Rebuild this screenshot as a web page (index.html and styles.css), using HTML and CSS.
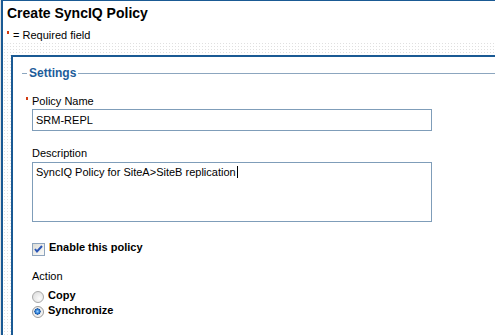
FILE: index.html
```html
<!DOCTYPE html>
<html lang="en">
<head>
    <meta charset="UTF-8">
    <meta name="viewport" content="width=device-width, initial-scale=1.0">
    <title>Create SyncIQ Policy</title>
    <link rel="stylesheet" href="styles.css">
</head>
<body>

    <div class="page">
        <div class="header">
            <h1 class="title">Create SyncIQ Policy</h1>
            <p class="req-note"><span class="req"></span>= Required field</p>
        </div>

        <div class="content">
            <div class="panel">
                <fieldset class="group">
                    <legend>Settings</legend>
                    <div class="fields">

                        <div class="field field-first">
                            <label class="label" for="policyName"><span class="req"></span>Policy Name</label>
                            <input type="text" id="policyName" class="text-input" value="SRM-REPL">
                        </div>

                        <div class="field field-desc">
                            <label class="label">Description</label>
                            <div class="text-area">SyncIQ Policy for SiteA&gt;SiteB replication<span class="caret"></span></div>
                        </div>

                        <div class="check-row">
                            <span class="checkbox">
                                <svg width="11" height="11" viewBox="0 0 11 11">
                                    <path d="M2 5 L4 7.5 L9 2" fill="none" stroke="#2b55b5" stroke-width="2"/>
                                </svg>
                            </span>
                            <span class="check-text">Enable this policy</span>
                        </div>

                        <div class="action-label">Action</div>
                        <div class="radio-row">
                            <span class="radio"></span>
                            <span class="radio-text">Copy</span>
                        </div>
                        <div class="radio-row">
                            <span class="radio checked"></span>
                            <span class="radio-text">Synchronize</span>
                        </div>

                    </div>
                </fieldset>
            </div>
        </div>
    </div>

</body>
</html>
```

FILE: styles.css
```css
body {
    margin: 0;
    background-color: #e2e2e2;
    font-family: "Liberation Sans", Arial, sans-serif;
    font-size: 11px;
    color: #000;
}
.page {
    margin-left: 1px;
    min-height: 334px;
    background: #fff;
    border-top: 1px solid #1a5a94;
    border-left: 2px solid #1a5a94;
}
.header {
    padding: 4px 0 0 4px;
}
.title {
    margin: 0;
    font-size: 14px;
    font-weight: bold;
    line-height: 17px;
}
.req-note {
    margin: 7px 0 0;
    line-height: 13px;
}
.req {
    display: inline-block;
    width: 2px;
    height: 3px;
    margin-right: 4px;
    vertical-align: 5px;
    background-color: #d23c12;
}
.content {
    padding: 13px 0 0 8px;
    background-color: #fff;
    background-image: radial-gradient(#e0e0e0 35%, transparent 45%);
    background-size: 3px 3px;
}
.panel {
    background: #fff;
    border-top: 2px solid #1a5a94;
    border-left: 2px solid #1a5a94;
    padding: 9px 0 20px 9px;
}
.group {
    margin: 0;
    padding: 0 0 0 5px;
    border: 0;
    border-top: 1px solid #8ca6bf;
}
.group legend {
    padding: 0 2px;
    font-size: 12px;
    font-weight: bold;
    line-height: 15px;
    color: #1d5c9a;
}
.fields {
    padding-left: 5px;
}
.field-first {
    margin-top: 14px;
}
.field-desc {
    margin-top: 16px;
}
.label {
    display: block;
    line-height: 13px;
    margin-bottom: 1px;
}
.label .req {
    margin-left: -6px;
}
.field-desc .label {
    margin-bottom: 2px;
}
.text-input {
    display: block;
    box-sizing: border-box;
    width: 400px;
    height: 22px;
    margin: 0;
    padding: 0 3px;
    border: 1px solid #7f9db9;
    font-family: "Liberation Sans", Arial, sans-serif;
    font-size: 11px;
    color: #000;
    outline: none;
}
.text-area {
    box-sizing: border-box;
    width: 400px;
    height: 60px;
    padding: 3px 3px;
    border: 1px solid #7f9db9;
    line-height: 13px;
}
.caret {
    display: inline-block;
    width: 1px;
    height: 12px;
    margin-left: 1px;
    vertical-align: -2px;
    background: #000;
}
.check-row, .radio-row {
    display: flex;
    align-items: flex-start;
    gap: 4px;
    line-height: 13px;
    font-weight: bold;
}
.check-row {
    margin-top: 19px;
}
.checkbox {
    box-sizing: border-box;
    width: 13px;
    height: 13px;
    margin-top: 2px;
    border: 1px solid #8ea4bd;
    background: linear-gradient(135deg, #dcdcd6, #f6f6f4 80%);
}
.checkbox svg {
    display: block;
}
.action-label {
    margin-top: 14px;
    line-height: 13px;
}
.radio-row {
    margin-top: 1px;
}
.action-label + .radio-row {
    margin-top: 6px;
}
.radio {
    box-sizing: border-box;
    width: 12px;
    height: 12px;
    margin-top: 2px;
    border: 1px solid #a8a8a8;
    border-radius: 50%;
    background: radial-gradient(circle at 65% 65%, #fbfbfb, #d8d8d8);
}
.radio.checked {
    border-color: #9a9a9a;
    background: radial-gradient(circle at 45% 45%, #9fd3ff 0, #2f7fd6 25%, #124f9c 38%, #e8e8e8 42%, #f6f6f6 70%, #d6d6d6);
}
```
